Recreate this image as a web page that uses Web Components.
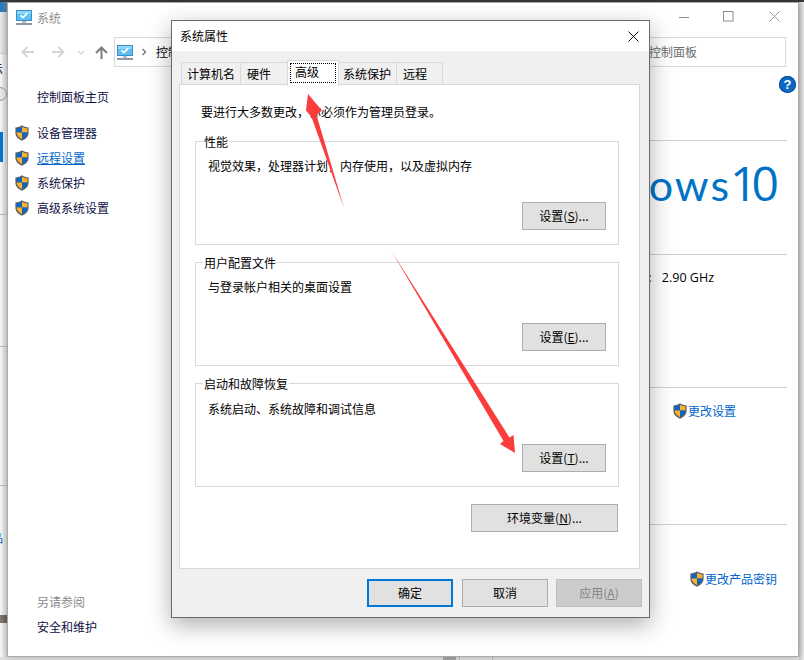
<!DOCTYPE html>
<html lang="zh-CN"><head><meta charset="utf-8"><title>系统属性</title>
<style>
html,body{margin:0;padding:0;background:#f1f1f1}
body{font:12px/16px "Noto Sans CJK SC","Noto Sans",sans-serif;color:#000}
</style></head>
<body>
<x-desktop>
  <x-backdrop slot="back"></x-backdrop>
  <x-system-window slot="win"></x-system-window>
  <x-dialog slot="dlg"></x-dialog>
  <x-arrows slot="over"></x-arrows>
</x-desktop>

<script>
const FONT='"Noto Sans CJK SC","Noto Sans",sans-serif';
function def(name,html,extra){
  const t=document.createElement('template');t.innerHTML=html;
  customElements.define(name,class extends HTMLElement{
    constructor(){super();this.attachShadow({mode:'open'}).appendChild(t.content.cloneNode(true));}
    connectedCallback(){if(extra)extra(this);}
  });
}
def('x-desktop',`<style>
:host{display:block;position:relative;width:804px;height:660px;overflow:hidden;background:#ececec}
::slotted([slot=back]){position:absolute;inset:0}
::slotted([slot=win]){position:absolute;left:7px;top:2px}
::slotted([slot=dlg]){position:absolute;left:171px;top:20px}
::slotted([slot=over]){position:absolute;inset:0;pointer-events:none}
</style><slot name="back"></slot><slot name="win"></slot><slot name="dlg"></slot><slot name="over"></slot>`);

def('x-backdrop',`<style>
:host{display:flex;flex-direction:column;background:#fff}
.top{height:2px;background:#3a3a3a;flex:none}
.main{flex:1;display:flex;min-height:0}
.left{width:7px;flex:none;display:flex;flex-direction:column;overflow:hidden;background:linear-gradient(90deg,#fafafa,#d8d8d8)}
.left>div{flex:none;position:relative}
.blue{height:10px;background:linear-gradient(90deg,#1f7cc4,#5a88a8)}
.l2{height:41px;background:linear-gradient(90deg,#ededed,#cfcfcf);border-bottom:1px solid #cfcfcf;margin-top:0}
.char{height:16px;width:16px;margin-left:-9px;font:12px/16px ${FONT};white-space:nowrap;color:#222}
.circ{height:14px;width:14px;margin:10px 0 0 -7px;border:1px solid #999;border-radius:50%;box-sizing:border-box;background:#e8e8e8}
.s1{height:30px;margin-top:31px;width:3px;background:#0078d7}
.ln{height:1px;background:#bdbdbd}
.pin{color:#0066cc!important}
.brown{height:8px;background:linear-gradient(90deg,#8d7c74,#6a5d57)}
.right{flex:1}
.edge{position:absolute;right:0;top:2px;bottom:0;width:5px;background:linear-gradient(90deg,#c9c9c9,#ececec)}
.bot{height:3px;flex:none;background:#e2e2e2;display:flex}
.bot i{display:block;height:3px}
</style>
<div class="top"></div>
<div class="main"><div class="left">
  <div class="blue"></div><div class="l2"></div>
  <div style="height:7px"></div><div class="char">示</div>
  <div class="circ"></div>
  <div class="s1"></div>
  <div style="height:52px"></div><div class="ln"></div>
  <div style="height:131px"></div><div class="ln"></div>
  <div style="height:138px"></div><div class="ln"></div>
  <div style="height:44px"></div><div class="char pin">品</div>
  <div style="height:69px"></div><div class="brown"></div>
</div><div class="right"></div><div class="edge"></div></div>
<div class="bot"><i style="width:443px"></i><i style="width:13px;background:#a8a8a8"></i><i style="width:3px"></i><i style="width:1px;background:#bbb"></i><i style="width:32px"></i><i style="width:1px;background:#bbb"></i></div>`);

const SHIELD=`<svg width="14" height="16" viewBox="0 0 14 16" style="display:block">
<path d="M7 .3C5 1.8 3 2.3.4 2.5v5.2c0 3.6 2.8 6.4 6.6 8 3.8-1.6 6.6-4.4 6.6-8V2.5C11 2.3 9 1.8 7 .3z" fill="#5a5f66"/>
<path d="M7 1.7C5.3 2.9 3.4 3.3 1.6 3.5V7.6H7z" fill="#0b66c4"/>
<path d="M7 1.7c1.7 1.2 3.6 1.6 5.4 1.8v4.1H7z" fill="#fbb429"/>
<path d="M1.6 7.6c.1 2.9 2.3 5.1 5.4 6.6V7.6z" fill="#fbb429"/>
<path d="M12.4 7.6c-.1 2.9-2.3 5.1-5.4 6.6V7.6z" fill="#0b66c4"/></svg>`;
def('x-shield',`<style>:host{display:inline-block;width:14px;height:16px;flex:none}</style>${SHIELD}`);

def('x-monitor',`<style>:host{display:inline-block;width:16px;height:15px;flex:none}</style>
<svg width="16" height="15" viewBox="0 0 16 15" style="display:block">
<rect x=".5" y=".5" width="15" height="10" fill="#5cc0f5" stroke="#3c8fc4"/>
<rect x="1" y="1" width="14" height="3" fill="#8bd6fb"/>
<path d="M4.600 5.300l2.300 2.300 4.400-4.400" fill="none" stroke="#fff" stroke-width="1.800"/>
<rect x="6" y="11" width="4" height="2" fill="#b6bcc4"/><rect x="0" y="13" width="16" height="2" fill="#8e99a8"/></svg>`);

def('x-side-link',`<style>
:host{display:flex;align-items:center;height:25px;font:12px/16px ${FONT};color:#0f1146}
.ic{width:22px;display:flex;flex:none}
.t{white-space:nowrap}
:host([link]) .t{color:#0066cc;text-decoration:underline}
:host([muted]){color:#8a8a8a}
</style><span class="ic"><slot name="icon"></slot></span><span class="t"><slot></slot></span>`);

def('x-system-window',`<style>
:host{display:flex;flex-direction:column;box-sizing:border-box;width:792px;height:655px;background:#fff;border:1px solid #a9a9a9;box-shadow:0 0 8px rgba(0,0,0,.25);font:12px/16px ${FONT};color:#000}
.title{height:29px;display:flex;align-items:center;flex:none;padding:0 0 0 8px;box-sizing:border-box}
.title span{margin-left:5px;color:#8f8f8f}
.caps{margin-left:auto;display:flex;align-items:center;gap:0;padding-right:18px;margin-top:-2px}
.caps svg{display:block}
.nav{height:30px;flex:none;margin-top:5px;display:flex;align-items:center;padding-left:13px}
.nav svg{display:block;flex:none}
.addr{margin-left:6px;width:672px;height:30px;box-sizing:border-box;border:1px solid #d9d9d9;display:flex;align-items:center;padding-left:2px}
.addr b{font-weight:400}
.search{margin-left:auto;margin-right:88px;color:#6d6d6d;font-size:12px}
.body{flex:1;display:flex;min-height:0}
.side{width:200px;flex:none;box-sizing:border-box;padding:17px 0 17px 7px;display:flex;flex-direction:column}
.home{height:26px;display:flex;align-items:center;margin-bottom:10px}
.gap{flex:1}
.main{flex:1;display:flex;flex-direction:column}
.help{height:64px;flex:none;border-bottom:1px solid #d0d0d0;margin-right:11px;display:flex;justify-content:flex-end;box-sizing:content-box;padding-top:9px}
.help span{display:block;width:17px;height:17px;border-radius:50%;background:#0b66c4;color:#fff;font:700 13px/17px "Liberation Sans",sans-serif;text-align:center;margin-right:-9px;box-shadow:inset 0 0 0 1px #0a4f9a}
.sec{border-bottom:1px solid #d0d0d0;margin-right:11px;flex:none;display:flex;justify-content:flex-end;box-sizing:border-box}
.logo{height:114px;align-items:flex-start;padding-right:9px;color:#0173c7}
.logo div{display:flex;align-items:baseline;margin-top:14px;line-height:56px}
.logo .o{font:400 43px/56px Lato,"Open Sans",sans-serif;letter-spacing:2px}
.logo .n{font:400 48px/56px "Open Sans","Noto Sans",sans-serif;margin-left:-1px;letter-spacing:-6px;margin-right:5px}
.cpu{height:133px;padding:15px 73px 0 0}
.cpu div{font:12.5px/16px "Open Sans","Noto Sans",sans-serif;white-space:nowrap}
.cpu i{font-style:normal;color:#444;margin-right:10px}
.ch{height:137px;padding:15px 51px 0 0;color:#0066cc}
.ch div,.key div{display:flex;align-items:center;gap:1px;height:16px}
.key{border:0;flex:1;padding:46px 10px 0 0;color:#0066cc}
</style>
<div class="title"><x-monitor></x-monitor><span>系统</span>
  <div class="caps">
   <svg width="10" height="10" style="margin-right:34px"><path d="M0 5.500h10" stroke="#8c8c8c"/></svg>
   <svg width="11" height="11" style="margin-right:35px"><rect x=".5" y=".5" width="9.500" height="9.500" fill="none" stroke="#8c8c8c"/></svg>
   <svg width="11" height="11"><path d="M.5.5l10 10M10.500.5l-10 10" stroke="#9a9a9a" fill="none"/></svg>
  </div>
</div>
<div class="nav">
  <svg width="14" height="12" viewBox="0 0 14 12"><path d="M13 6H2M6.500 1L1.500 6l5 5" fill="none" stroke="#d4d4d4" stroke-width="1.800"/></svg>
  <svg width="14" height="12" viewBox="0 0 14 12" style="margin-left:16px"><path d="M1 6h11M7.500 1l5 5-5 5" fill="none" stroke="#d4d4d4" stroke-width="1.800"/></svg>
  <svg width="8" height="5" viewBox="0 0 8 5" style="margin-left:12px"><path d="M1 1l3 3 3-3" fill="none" stroke="#d4d4d4" stroke-width="1.300"/></svg>
  <svg width="13" height="13" viewBox="0 0 13 13" style="margin-left:10px"><path d="M6.500 13V2M1 7l5.500-5.500L12 7" fill="none" stroke="#7d7d7d" stroke-width="2"/></svg>
  <div class="addr"><x-monitor></x-monitor>
    <svg width="6" height="8" viewBox="0 0 6 8" style="margin-left:8px"><path d="M1.500 1l3 3-3 3" fill="none" stroke="#707070" stroke-width="1.300"/></svg>
    <b style="margin-left:9px">控制</b><span class="search">控制面板</span></div>
</div>
<div class="body">
 <div class="side">
  <div class="home"><x-side-link style="height:16px">控制面板主页</x-side-link></div>
  <x-side-link><x-shield slot="icon"></x-shield>设备管理器</x-side-link>
  <x-side-link link><x-shield slot="icon"></x-shield>远程设置</x-side-link>
  <x-side-link><x-shield slot="icon"></x-shield>系统保护</x-side-link>
  <x-side-link><x-shield slot="icon"></x-shield>高级系统设置</x-side-link>
  <div class="gap"></div>
  <div style="height:25px;display:flex;align-items:center"><x-side-link muted style="height:16px">另请参阅</x-side-link></div>
  <div style="height:25px;display:flex;align-items:center"><x-side-link style="height:16px">安全和维护</x-side-link></div>
 </div>
 <div class="main">
  <div class="help"><span>?</span></div>
  <div class="sec logo"><div><span class="o">ows</span><span class="n">10</span></div></div>
  <div class="sec cpu"><div><i>:</i>2.90 GHz</div></div>
  <div class="sec ch"><div><x-shield></x-shield>更改设置</div></div>
  <div class="sec key"><div><x-shield></x-shield>更改产品密钥</div></div>
 </div>
</div>`);

def('x-tab',`<style>
:host{display:flex;align-items:center;justify-content:flex-start;box-sizing:border-box;height:23px;margin:2px 0 0 -1px;border:1px solid #d9d9d9;background:#f0f0f0;font:12px/16px ${FONT};white-space:nowrap;position:relative}
:host([active]){height:26px;margin:0 0 0 -1px;background:#fff;border-bottom:0;z-index:2;align-items:flex-start;padding:2px 0 0 2px!important}
:host([active]) .f{outline:1px dotted #000;outline-offset:-1px;box-sizing:border-box;width:46px;height:20px;display:flex;align-items:center;padding:0 0 2px 5px}
</style><span class="f"><slot></slot></span>`);

def('x-btn',`<style>
:host{display:flex;align-items:center;justify-content:center;box-sizing:border-box;width:84px;height:28px;flex:none;background:#e1e1e1;border:1px solid #adadad;font:12px/16px ${FONT};color:#000;white-space:nowrap}
:host([primary]){border:2px solid #0078d7}
:host([disabled]){background:#cccccc;border-color:#bfbfbf;color:#838383}
</style><slot></slot>`);

def('x-group',`<style>
:host{display:flex;flex-direction:column;justify-content:space-between;align-items:flex-start;box-sizing:border-box;position:relative;width:424px;height:104px;border:1px solid #d9d9d9;padding:16px 12px 14px 12px;font:12px/16px ${FONT}}
.lg{position:absolute;left:7px;top:-8px;background:#fff;padding:0 1px;white-space:nowrap}
.b{align-self:flex-end;display:flex}
</style><span class="lg"><slot name="legend"></slot></span><div><slot></slot></div><div class="b"><slot name="btn"></slot></div>`);

def('x-dialog',`<style>
:host{display:flex;flex-direction:column;box-sizing:border-box;width:479px;height:598px;background:#f0f0f0;border:1px solid #6a6a6a;box-shadow:0 7px 22px rgba(0,0,0,.32);font:12px/16px ${FONT};color:#000}
.title{height:30px;flex:none;background:#fff;display:flex;align-items:center;padding:0 10px 0 8px;box-sizing:border-box}
.title svg{margin-left:auto;display:block}
.tabs{display:flex;height:25px;margin:9px 0 -1px 0;padding-left:9px;position:relative;z-index:2;flex:none}
.panel{margin-left:7px;width:461px;height:485px;flex:none;box-sizing:border-box;background:#fff;border:1px solid #d9d9d9;padding:19px 0 0 15px;display:flex;flex-direction:column}
.note{padding-left:6px;margin-bottom:21px;white-space:nowrap}
.stack{display:flex;flex-direction:column;gap:17px;align-items:flex-start}
.env{width:424px;display:flex;justify-content:flex-end;padding-right:1px;box-sizing:border-box}
.foot{display:flex;justify-content:flex-end;margin-top:10px;padding-right:7px}
.foot x-btn{width:86px}
.env x-btn{width:147px}
u{text-underline-offset:1px}
</style>
<div class="title"><span>系统属性</span><svg width="11" height="11"><path d="M.5.5l10 10M10.500.5l-10 10" stroke="#111" fill="none"/></svg></div>
<div class="tabs">
 <x-tab style="width:60px;margin-left:0;padding-left:5px">计算机名</x-tab><x-tab style="width:48px;padding-left:6px">硬件</x-tab><x-tab active style="width:52px">高级</x-tab><x-tab style="width:59px;padding-left:4px">系统保护</x-tab><x-tab style="width:47px;padding-left:6px">远程</x-tab>
</div>
<div class="panel">
 <div class="note">要进行大多数更改，你必须作为管理员登录。</div>
 <div class="stack">
  <x-group><span slot="legend">性能</span>视觉效果，处理器计划，内存使用，以及虚拟内存<x-btn slot="btn">设置(<u>S</u>)...</x-btn></x-group>
  <x-group><span slot="legend">用户配置文件</span>与登录帐户相关的桌面设置<x-btn slot="btn">设置(<u>E</u>)...</x-btn></x-group>
  <x-group><span slot="legend">启动和故障恢复</span><span style="position:relative;top:1px">系统启动、系统故障和调试信息</span><x-btn slot="btn">设置(<u>T</u>)...</x-btn></x-group>
  <div class="env"><x-btn>环境变量(<u>N</u>)...</x-btn></div>
 </div>
</div>
<div class="foot"><x-btn primary style="margin-right:9px">确定</x-btn><x-btn style="margin-right:8px">取消</x-btn><x-btn disabled>应用(<u>A</u>)</x-btn></div>`);

def('x-arrows',`<style>:host{display:block}svg{display:block}</style>
<svg width="804" height="660" viewBox="0 0 804 660">
<path d="M308 94L322 110.500 316.500 115 344 208 311.500 117 306 110.500z" fill="#fb3c3c"/>
<path d="M391.500 251L509.500 437.500 513.500 435 515 453 500 444 503.500 441z" fill="#fb3c3c"/>
</svg>`);
</script>
</body></html>
